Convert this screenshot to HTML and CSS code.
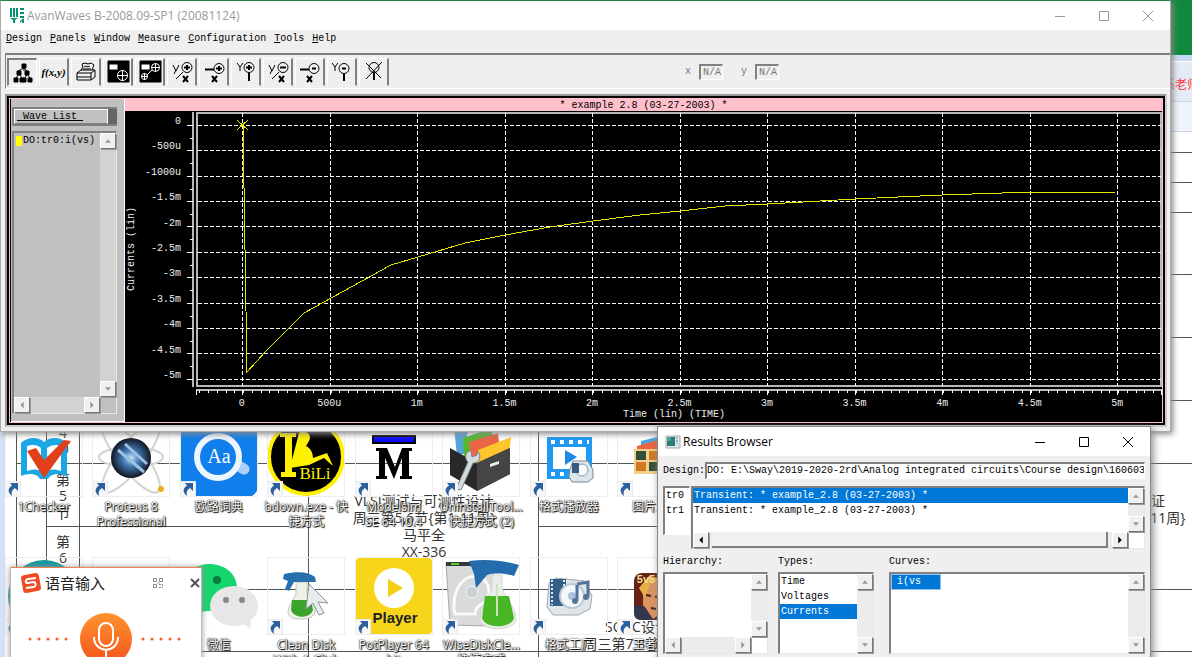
FILE: index.html
```html
<!DOCTYPE html>
<html lang="en">
<head>
<meta charset="utf-8">
<title>AvanWaves</title>
<link rel="stylesheet" href="styles.css">
</head>
<body>
<svg class="defs" aria-hidden="true">
  <symbol id="up" viewBox="0 0 16 16"><path d="M4.500 10h7L8 6z"/></symbol>
  <symbol id="down" viewBox="0 0 16 16"><path d="M4.500 6h7L8 10z"/></symbol>
  <symbol id="left" viewBox="0 0 16 16"><path d="M10 4v8L6 8z"/></symbol>
  <symbol id="right" viewBox="0 0 16 16"><path d="M6 4v8l4-4z"/></symbol>
  <symbol id="shortcut" viewBox="0 0 16 16"><path d="M0 0h16v16H0z" fill="#f7f7f7" stroke="#ddd"/><path d="M5 2h8v8l-3-3c-3 2-4 4-3 8C2 11 3 7 7 4.500z" fill="#2c5f9e"/></symbol>
  <symbol id="min" viewBox="0 0 12 12"><path d="M1 6.500h10" fill="none"/></symbol>
  <symbol id="max" viewBox="0 0 12 12"><path d="M1.500 1.500h9v9h-9z" fill="none"/></symbol>
  <symbol id="close" viewBox="0 0 12 12"><path d="M1 1l10 10M11 1L1 11" fill="none"/></symbol>
</svg>
<main class="desktop">
  <svg class="sheet" width="1192" height="657" viewBox="0 0 1192 657" aria-hidden="true">
    <path d="M0 0h5v657H0z" fill="#d3e2f5"/>
    <path d="M1160 0h32v55h-32z" fill="#10893e"/>
    <path d="M1160 55h32v6h-32z" fill="#c8daf3"/>
    <path d="M1160 62h32v39h-32z" fill="#e4ebf7"/>
    <path d="M1160 102h32v29h-32z" fill="#eff4fb"/>
    <path d="M1160 101.500h32M1160 131.500h32" stroke="#c9d6e8"/>
    <path d="M16.500 420v237M46.500 420v237M79.500 420v237M308.500 420v237M538.500 420v237M16 463.500h1176M46 526.500h262M538 526.500h140M80 589.500h1112M80 651.500h1112M1160 152.500h32M1160 182.500h32M1160 212.500h32M1160 274.500h32M1160 337.500h32M1160 400.500h32" stroke="#555"/>
    <g class="sheet-text">
      <text x="63" y="438">4</text><text x="63" y="453">节</text>
      <text x="63" y="485">第</text><text x="63" y="501">5</text><text x="63" y="518">节</text>
      <text x="63" y="547">第</text><text x="63" y="563">6</text>
      <text x="424" y="506">VLSI测试与可测性设计</text>
      <text x="424" y="523">周三第5,6节{第1-11周}</text>
      <text x="424" y="540">马平全</text>
      <text x="424" y="557">XX-336</text>
      <text x="637" y="632">SOPC设计</text>
      <text x="631" y="649">周三第7,8节{第</text>
      <text x="1158" y="506">证</text><text x="1168" y="523">11周}</text>
      <text class="red" x="1181" y="89">系老师</text>
    </g>
  </svg>

  <section class="icons" aria-label="Desktop shortcuts">
    <a class="icon" href="#"><svg viewBox="0 0 78 78"><path d="M16 24c6-6 17-7 23-1 6-6 17-5 23 1v33c-7-3-16-3-19 3h-8c-3-6-12-6-19-3z" fill="#1aa7e6"/><path d="M22 27c6-2 11-1 14 2v23c-4-2-9-2-14 0zM42 29c4-3 9-4 14-2v25c-5-2-10-2-14 0z" fill="#fff"/><path d="M22 32l9-3 8 12 20-20 7 1-27 37z" fill="#e2401b"/><use href="#shortcut" y="62" width="16" height="16"/></svg><span>1Checker</span></a>
    <a class="icon" href="#"><svg viewBox="0 0 78 78"><defs><radialGradient id="orb"><stop offset="0" stop-color="#cce4fa"/><stop offset=".4" stop-color="#447cb5"/><stop offset="1" stop-color="#111521"/></radialGradient></defs><g fill="none" stroke="#cdd4d3" stroke-width="2"><ellipse cx="39" cy="38" rx="32" ry="10"/><ellipse cx="39" cy="38" rx="44" ry="13" transform="rotate(52 39 38)"/><ellipse cx="39" cy="38" rx="44" ry="13" transform="rotate(128 39 38)"/></g><circle cx="39" cy="39" r="20" fill="url(#orb)"/><path d="M26 31l26 22M33 25l22 20" stroke="#9bc2e5" stroke-width="3" fill="none"/><circle cx="69" cy="70" r="3" fill="#efac23"/><use href="#shortcut" y="62" width="16" height="16"/></svg><span>Proteus 8 Professional</span></a>
    <a class="icon" href="#"><svg viewBox="0 0 78 78"><rect width="78" height="78" rx="11" fill="#117feb"/><path d="M55 45l9 5" stroke="#a9d0f8" stroke-width="11" stroke-linecap="round"/><circle cx="38" cy="38" r="21" fill="#117feb" stroke="#edf5ff" stroke-width="6"/><text x="39" y="44" text-anchor="middle" fill="#fff" font-family="Liberation Serif" font-size="20">Aa</text><use href="#shortcut" y="62" width="16" height="16"/></svg><span>欧路词典</span></a>
    <a class="icon" href="#"><svg viewBox="0 0 78 78"><circle cx="39" cy="38" r="37" fill="#000" stroke="#fff200" stroke-width="4"/><path d="M13 14h16v4h-4v35h4v5H14v-5h4V18h-5z" fill="#fff200"/><path d="M32 14c5-4 14 1 10 8l-3 5c5 2 7 8 7 12l14-5 6 13-9-8-15 7-19 3 3-12z" fill="#fff200"/><text x="48" y="60" text-anchor="middle" fill="#fff200" font-family="Liberation Serif" font-size="17">BiLi</text><use href="#shortcut" y="62" width="16" height="16"/></svg><span>bdown.exe - 快捷方式</span></a>
    <a class="icon" href="#"><svg viewBox="0 0 78 78"><path d="M18 17h42v7H18z" fill="#0809f5" stroke="#000" stroke-width="2"/><path d="M21 60v-3h3V32h-3v-3h11l8 19 7-19h10v3h-3v25h3v3H45v-3h2V39l-8 21-9-21v18h2v3z"/><use href="#shortcut" y="62" width="16" height="16"/></svg><span>Modelsim<br>SE 64 10.4</span></a>
    <a class="icon" href="#"><svg viewBox="0 0 78 78"><path d="M12 8l14-2-2 28-9 3z" fill="#52a5d8"/><path d="M21 19l29-10 2 27-30 5z" fill="#56b82c"/><path d="M27 23l29-9 3 28-30 1z" fill="#e96545"/><path d="M36 31l33-13-3 27-31 2z" fill="#ffc52d"/><path d="M8 29l27 15 33-15v26L35 72 8 56z" fill="#282828"/><path d="M35 44v28l33-17V29z" fill="#454545"/><path d="M48 45l9-3v3l-9 3z" fill="#eee"/><path d="M14 70l12-27c-5-5-1-12 3-11l1 6 5-2 1-4c5 7-1 13-5 12L19 71z" fill="#d5dade" stroke="#778888"/><use href="#shortcut" y="62" width="16" height="16"/></svg><span>UninstallTool...<br>快捷方式 (2)</span></a>
    <a class="icon" href="#"><svg viewBox="0 0 78 78"><path d="M17 18h45v42H17z" fill="#1f99f4"/><path d="M23 28h33v22H23z" fill="#fff"/><path d="M21 23h38M21 55h38" stroke="#fff" stroke-width="4" stroke-dasharray="4 5"/><path d="M35 31v15l12-8z" fill="#1f88e5"/><path d="M40 50l3-8h15l5 9v8l-5 4H42l-3-5z" fill="#dce4ec" stroke="#7c8791"/><circle cx="52" cy="51" r="6" fill="#f8fafb" stroke="#829cb4"/><path d="M42 44h7v10h-7z" fill="#365b7c"/><use href="#shortcut" y="62" width="16" height="16"/></svg><span>格式播放器</span></a>
    <a class="icon" href="#"><svg viewBox="0 0 78 78"><path d="M24 22l20-5 10 10-10 20-20-5z" fill="#47a8df"/><path d="M20 27l21-6 6 30-27 2z" fill="#ed6441"/><path d="M17 30h27v25H17z" fill="#f2cf8b"/><path d="M19 32h10v9H19zM32 43h10v9H32z" fill="#334f39"/><path d="M19 43h10v9H19zM32 32h10v9H32z" fill="#d17822"/><use href="#shortcut" y="62" width="16" height="16"/></svg><span>图片工厂</span></a>

    <a class="icon" href="#"><svg viewBox="0 0 78 78"><circle cx="39" cy="39" r="36" fill="#10989b"/><use href="#shortcut" y="62" width="16" height="16"/></svg><span></span></a>
    <a class="icon" href="#"><svg viewBox="0 0 78 78"><use href="#shortcut" y="62" width="16" height="16"/></svg><span></span></a>
    <a class="icon" href="#"><svg class="bare" viewBox="0 0 78 78"><path d="M26 7c18-1 31 9 31 24S43 54 27 54L0 59V14z" fill="#16d46e"/><circle cx="37" cy="23" r="4" fill="#087d3c"/><ellipse cx="54" cy="49" rx="24" ry="20" fill="#e7e7e7"/><path d="M62 66l9 6-1-12z" fill="#e7e7e7"/><circle cx="46" cy="43" r="3" fill="#888"/><circle cx="62" cy="43" r="3" fill="#888"/></svg><span>微信</span></a>
    <a class="icon" href="#"><svg viewBox="0 0 78 78"><path d="M29 25h11v12l8 14c1 8-4 11-14 11-11 0-15-3-12-12l7-13z" fill="#edf1e6" stroke="#bfc8b7"/><path d="M25 43h19l2 10c-3 9-19 9-22 0z" fill="#3aa32e"/><path d="M17 17c14-3 25-2 31 3l1 5H27l-5 9-4-2 3-8-5-2z" fill="#286fae"/><path d="M42 27l19 19-10-1 6 11-5 2-6-12-7 6z" fill="#e7ecee" stroke="#8a969b"/><use href="#shortcut" y="62" width="16" height="16"/></svg><span>Clean Disk<br>With 1-Click</span></a>
    <a class="icon" href="#"><svg viewBox="0 0 78 78"><rect x="1" y="1" width="76" height="76" rx="4" fill="#f7d51b"/><circle cx="39" cy="31" r="20" fill="#fff"/><path d="M33 22v18l15-9z" fill="#f4cf16"/><text x="40" y="66" text-anchor="middle" fill="#222" font-family="Liberation Sans" font-size="15" font-weight="bold">Player</text><use href="#shortcut" y="62" width="16" height="16"/></svg><span>PotPlayer 64<br>bit</span></a>
    <a class="icon" href="#"><svg viewBox="0 0 78 78"><path d="M4 6l48-1-3 64-41-1z" fill="#d8dadb" stroke="#a4a8aa"/><path d="M4 5h34v4H4z" fill="#34393c"/><path d="M9 7h8" stroke="#56ce2b" stroke-width="2"/><path d="M12 52c-2-38 34-42 35-17 1 15-13 8-14 22H13z" fill="none" stroke="#fafafa" stroke-width="3"/><circle cx="30" cy="35" r="6" fill="#ccd0d1" stroke="#f8f8f8"/><path d="M50 18h10v13c0 5 13 17 14 31 0 13-36 13-36 0 1-15 12-26 12-31z" fill="#ebeee8" stroke="#d5d8d1"/><path d="M43 39h24l5 22c-3 11-29 11-32 0z" fill="#49b626"/><path d="M55 27v32" stroke="#cde3ba" stroke-width="2"/><path d="M27 4c17-2 33-1 50 4l-5 11c-11-3-20-3-27-1L34 31l-2-14z" fill="#246cad"/><use href="#shortcut" y="62" width="16" height="16"/></svg><span>WiseDiskCle...<br>快捷方式</span></a>
    <a class="icon" href="#"><svg viewBox="0 0 78 78"><path d="M19 26l7-5 28 3 8 15-2 13-12 6H23l-6-8z" fill="#dfe5e9" stroke="#9ca8b0"/><path d="M20 22h16v27H20z" fill="#375e86"/><path d="M22 23v25M34 23v25" stroke="#d7edf8" stroke-width="2" stroke-dasharray="2 2"/><circle cx="42" cy="39" r="12" fill="#f5f7f8" stroke="#b9c8d2" stroke-width="2"/><circle cx="42" cy="39" r="4" fill="#abc6dc"/><path d="M47 27l11-2v15M47 28v16" fill="none" stroke="#54749a" stroke-width="3"/><circle cx="45" cy="44" r="3" fill="#54749a"/><circle cx="56" cy="40" r="3" fill="#54749a"/><use href="#shortcut" y="62" width="16" height="16"/></svg><span>格式工厂</span></a>
    <a class="icon" href="#"><svg viewBox="0 0 78 78"><rect x="17" y="16" width="46" height="47" rx="8" fill="#682116"/><path d="M26 29l10-7 15 8-3 23-12 9-10-14z" fill="#dc9460"/><path d="M22 31l10-12 14 3-13 4-5 15z" fill="#e6b04b"/><path d="M17 48l11 2 8 13H24c-5 0-7-3-7-7z" fill="#33374e"/><text x="29" y="26" text-anchor="middle" fill="#f7df8b" font-family="Liberation Sans" font-size="11" font-weight="bold">5v5</text><path d="M29 38l5 1M38 40l5-1M34 51l5 1" stroke="#442018" stroke-width="2"/><use href="#shortcut" y="62" width="16" height="16"/></svg><span>王者荣耀</span></a>
  </section>

  <section class="voice">
    <svg class="sogou" viewBox="0 0 20 20"><rect x="1" y="1" width="18" height="18" rx="3" fill="#f04b24" transform="rotate(-10 10 10)"/><path d="M15 5L7 6c-3 1-3 4 0 4l5-1c4 0 3 5 0 5l-7 1" fill="none" stroke="#fff" stroke-width="2"/></svg>
    <h2>语音输入</h2>
    <svg class="qr" viewBox="0 0 12 12"><path d="M1.500 1.500h3v3h-3zM7.500 1.500h3v3h-3zM1.500 7.500h3v3h-3zM7 7.500h2M10.500 7v2M7 10.500h2M10 10.500h1M5.500 6h2" fill="none" stroke="#888"/></svg>
    <button class="voice-close" aria-label="Close"><svg viewBox="0 0 12 12"><path d="M2 2l8 8M10 2l-8 8" stroke="#555" stroke-width="2"/></svg></button>
    <svg class="microphone" viewBox="0 0 191 64"><defs><linearGradient id="flame" x2="0" y2="1"><stop stop-color="#ff932f"/><stop offset="1" stop-color="#f4511b"/></linearGradient></defs><circle cx="96" cy="36" r="26" fill="url(#flame)"/><rect x="89" y="20" width="14" height="23" rx="7" fill="none" stroke="#fff" stroke-width="2"/><path d="M84 34c0 17 24 17 24 0M96 47v11" stroke="#fff" stroke-width="2" fill="none"/><path d="M20 36h38M133 36h38" stroke="#ff5b20" stroke-width="3" stroke-linecap="round" stroke-dasharray="0 9"/></svg>
  </section>

  <section class="window waves">
    <header class="titlebar">
      <svg class="logo" viewBox="0 0 16 16"><path d="M1 0h2v9H1zM4 0h2v9H4zM7 0h2v9H7zM1 10h8l-3 2v3H4v-3zM11 0h4v2h-4zM11 4h4v2h-4zM11 8h4v2h-4zM15 10v5h-2v-2l-2 2v-2z" fill="#079071"/></svg>
      <h1>AvanWaves B-2008.09-SP1 (20081124)</h1>
      <div class="controls"><button aria-label="Minimize"><svg><use href="#min"/></svg></button><button aria-label="Maximize"><svg><use href="#max"/></svg></button><button aria-label="Close"><svg><use href="#close"/></svg></button></div>
    </header>
    <nav class="menubar"><button><u>D</u>esign</button><button><u>P</u>anels</button><button><u>W</u>indow</button><button><u>M</u>easure</button><button><u>C</u>onfiguration</button><button><u>T</u>ools</button><button><u>H</u>elp</button></nav>
    <div class="toolbar">
      <div class="tools">
        <button class="pressed" aria-label="Hierarchy"><svg viewBox="0 0 24 24"><path d="M11 4h4v4h-4zM6 11h4v4H6zM14 11h4v4h-4zM3 18h4v4H3zM9 18h4v4H9zM12 18h3v4h-3zM17 18h4v4h-4z" fill="#000"/><path d="M13 7v4M7 11l6-3 4 4M5 18l3-4 3 4M14 18l2-4 3 4"/></svg></button>
        <button aria-label="Function"><span class="fx">f(x,y)</span></button>
        <button aria-label="Print"><svg viewBox="0 0 24 24"><path d="M3 13h14v7H3zM3 13l4-3h14l-4 3M17 20l4-3v-7M7 10l2-3-1-3 3-1 3 1 3-1 3 2-2 5M3 17h14M10 7l2-1 2 1 2-1M9 9h8"/></svg></button>
        <button aria-label="Panel zoom"><svg viewBox="0 0 24 24"><path d="M2 1h21v21H2z" fill="#000"/><path d="M3 4h9v6H3z" fill="#fff"/><g stroke="#fff"><circle cx="16.500" cy="15.500" r="5"/><path d="M11 15.500h11M16.500 10v11"/></g></svg></button>
        <button aria-label="Panel fit"><svg viewBox="0 0 24 24"><path d="M2 1h21v21H2z" fill="#000"/><path d="M3 4h9v6H3z" fill="#fff"/><g stroke="#fff"><circle cx="17.500" cy="7.500" r="4"/><path d="M13 7.500h9M17.500 3v9M9 15l5-5"/><circle cx="6.500" cy="16.500" r="3"/><path d="M3 16.500h7M6.500 13v7"/></g></svg></button>
        <button aria-label="Zoom XY in"><svg viewBox="0 0 24 24"><circle cx="17" cy="7.500" r="5"/><path d="M3 5l3 6 3-6M6 10l-2 4M13 12l-7 7"/><path d="M14 7.500h6M17 5v5M13 16l5 6M18 16l-5 6" stroke-width="2"/></svg></button>
        <button aria-label="Zoom X in"><svg viewBox="0 0 24 24"><circle cx="17" cy="8.500" r="5"/><path d="M3 9.500h9M14 8.500h6M17 6v5M10 16l5 6M15 16l-5 6" stroke-width="2"/></svg></button>
        <button aria-label="Zoom Y in"><svg viewBox="0 0 24 24"><circle cx="15" cy="7.500" r="5"/><path d="M3 3l3 4 3-4M6 7v4"/><path d="M12 7.500h6M15 5v5M15 13v8" stroke-width="2"/></svg></button>
        <button aria-label="Zoom XY out"><svg viewBox="0 0 24 24"><circle cx="17" cy="7.500" r="5"/><path d="M3 5l3 6 3-6M6 10l-2 4M13 12l-7 7"/><path d="M14 7.500h6M13 16l5 6M18 16l-5 6" stroke-width="2"/></svg></button>
        <button aria-label="Zoom X out"><svg viewBox="0 0 24 24"><circle cx="16" cy="8.500" r="5"/><path d="M2 9.500h9M14 8.500h4M9 16l5 6M14 16l-5 6" stroke-width="2"/></svg></button>
        <button aria-label="Zoom Y out"><svg viewBox="0 0 24 24"><circle cx="14" cy="8.500" r="5"/><path d="M2 3l3 4 3-4M5 7v4"/><path d="M12 8.500h4M14 14v7" stroke-width="2"/></svg></button>
        <button aria-label="Zoom reset"><svg viewBox="0 0 24 24"><circle cx="12" cy="7.500" r="5"/><path d="M4 3l15 15M20 2L4 19"/><path d="M12 13v7" stroke-width="2"/></svg></button>
      </div>
      <div class="coords"><label for="cx">x</label><input id="cx" value="N/A" readonly><label for="cy">y</label><input id="cy" value="N/A" readonly></div>
    </div>
    <div class="frame"><div class="panes">
      <aside class="wave-panel">
        <div class="wave-head"><button><u>&nbsp;Wave List&nbsp;</u></button><i></i></div>
        <div class="listbox wave-list">
          <div class="items"><span class="wave"><i></i>DO:tr0:i(vs)</span></div>
          <div class="vbar"><button aria-label="Scroll up"><svg><use href="#up"/></svg></button><button aria-label="Scroll down"><svg><use href="#down"/></svg></button></div>
          <div class="hbar"><button aria-label="Scroll left"><svg><use href="#left"/></svg></button><button aria-label="Scroll right"><svg><use href="#right"/></svg></button></div>
        </div>
      </aside>
      <div class="graph">
        <div class="graph-title">* example 2.8 (03-27-2003) *</div>
        <div class="graph-body">
          <div class="y-title"><span>Currents (lin)</span></div>
          <div class="y-labels"><span>0</span><span>-500u</span><span>-1000u</span><span>-1.5m</span><span>-2m</span><span>-2.5m</span><span>-3m</span><span>-3.5m</span><span>-4m</span><span>-4.5m</span><span>-5m</span></div>
          <div class="plot">
            <svg class="plot-lines" viewBox="186 111 976 285" preserveAspectRatio="none" shape-rendering="crispEdges" fill="none">
              <g stroke="#b8b8b8" stroke-width="2"><path d="M193 112v275M197 387V113h964v273H197M196 390h966"/></g>
              <path d="M187 125.500h6M187 150.500h6M187 176.500h6M187 201.500h6M187 226.500h6M187 252.500h6M187 277.500h6M187 303.500h6M187 328.500h6M187 353.500h6M187 379.500h6M190 138.500h3M190 163.500h3M190 189.500h3M190 214.500h3M190 239.500h3M190 265.500h3M190 290.500h3M190 316.500h3M190 341.500h3M190 366.500h3" stroke="#fff"/>
              <path d="M199.250 391.500H1162" stroke="#fff" stroke-width="3" stroke-dasharray="1 7.750"/>
              <path d="M196.500 390v5M242.500 390v5M330.500 390v5M417.500 390v5M505.500 390v5M592.500 390v5M680.500 390v5M767.500 390v5M855.500 390v5M942.500 390v5M1030.500 390v5M1117.500 390v5M1161.500 390v5" stroke="#fff"/>
              <path d="M198 125.500h963M198 150.500h963M198 176.500h963M198 201.500h963M198 226.500h963M198 252.500h963M198 277.500h963M198 303.500h963M198 328.500h963M198 353.500h963M198 379.500h963M242.500 113v273M330.500 113v273M417.500 113v273M505.500 113v273M592.500 113v273M680.500 113v273M767.500 113v273M855.500 113v273M942.500 113v273M1030.500 113v273M1117.500 113v273" stroke="#fff" stroke-dasharray="4 2"/>
              <path d="M243 125l4 247 19-21 38-38 87-48 27-8 47-14 40-8 45-8 43-6 47-6 40-4 45-5 43-2 87-5 87-4 60-2 115-1M237 120l11 10M248 120l-11 10" stroke="#e5e500"/>
            </svg>
            <div class="x-labels"><span>0</span><span>500u</span><span>1m</span><span>1.5m</span><span>2m</span><span>2.5m</span><span>3m</span><span>3.5m</span><span>4m</span><span>4.5m</span><span>5m</span></div>
            <div class="x-title">Time (lin) (TIME)</div>
          </div>
        </div>
      </div>
    </div></div>
  </section>

  <section class="window browser">
    <header class="titlebar">
      <svg class="logo" viewBox="0 0 16 16"><path d="M1 2h14v12H1z" fill="#dce6ea" stroke="#aaa"/><path d="M2 3h8v9H2z" fill="#2f7c70"/><path d="M2 3h4v4H2z" fill="#49a3a0"/><path d="M12 3v7" stroke="#4f8ac2" stroke-dasharray="2 1"/></svg>
      <h2>Results Browser</h2>
      <div class="controls"><button aria-label="Minimize"><svg><use href="#min"/></svg></button><button aria-label="Maximize"><svg><use href="#max"/></svg></button><button aria-label="Close"><svg><use href="#close"/></svg></button></div>
    </header>
    <div class="browser-body">
      <div class="design-row"><label for="design">Design:</label><input id="design" value="DO: E:\Sway\2019-2020-2rd\Analog integrated circuits\Course design\160603012"></div>
      <div class="runs">
        <ul class="sunken run-ids"><li>tr0</li><li>tr1</li></ul>
        <div class="listbox run-list">
          <ul class="items"><li class="selected">Transient: * example_2.8 (03-27-2003) *</li><li>Transient: * example_2.8 (03-27-2003) *</li></ul>
          <div class="vbar"><button aria-label="Scroll up"><svg><use href="#up"/></svg></button><button aria-label="Scroll down"><svg><use href="#down"/></svg></button></div>
          <div class="hbar active"><button aria-label="Scroll left"><svg><use href="#left"/></svg></button><i class="thumb"></i><button aria-label="Scroll right"><svg><use href="#right"/></svg></button></div>
        </div>
      </div>
      <div class="columns">
        <div><h3>Hierarchy:</h3><div class="listbox"><ul class="items"></ul><div class="vbar"><button aria-label="Scroll up"><svg><use href="#up"/></svg></button><button aria-label="Scroll down"><svg><use href="#down"/></svg></button></div><div class="hbar"><button aria-label="Scroll left"><svg><use href="#left"/></svg></button><button aria-label="Scroll right"><svg><use href="#right"/></svg></button></div></div></div>
        <div class="types"><h3>Types:</h3><div class="listbox"><ul class="items"><li>Time</li><li>Voltages</li><li class="selected">Currents</li></ul><div class="vbar"><button aria-label="Scroll up"><svg><use href="#up"/></svg></button><button aria-label="Scroll down"><svg><use href="#down"/></svg></button></div></div></div>
        <div><h3>Curves:</h3><div class="listbox"><ul class="items"><li class="selected curve">i(vs</li></ul><div class="vbar"><button aria-label="Scroll up"><svg><use href="#up"/></svg></button><button aria-label="Scroll down"><svg><use href="#down"/></svg></button></div></div></div>
      </div>
    </div>
  </section>
</main>
</body>
</html>
```

FILE: styles.css
```css
* { box-sizing: border-box; }
body { margin: 0; background: #fff; font: 10px/15px "Liberation Mono", "Noto Sans CJK SC", monospace; color: #000; }
button, input { font: inherit; color: inherit; margin: 0; padding: 0; border: 0; background: none; border-radius: 0; }
h1, h2, h3, ul { margin: 0; padding: 0; font: inherit; list-style: none; }
svg { display: block; }
.defs { position: absolute; width: 0; height: 0; }
.desktop { position: relative; height: 100vh; min-height: 640px; overflow: hidden; }
.sheet { position: absolute; top: 0; left: 0; }
.sheet-text { font: 14px "Open Sans", "Noto Sans CJK SC", sans-serif; text-anchor: middle; fill: #333; }
.sheet-text .red { fill: #f33; font-size: 12px; }

.icons { position: absolute; top: 419px; left: 0; width: 700px; display: grid; grid-template-columns: repeat(8, minmax(0, 1fr)); grid-auto-rows: 138px; }
.icon { display: flex; flex-direction: column; align-items: center; font: 12px/15px "Open Sans", "Noto Sans CJK SC", sans-serif; text-align: center; text-decoration: none; color: #fff; }
.icon > svg { width: 78px; height: 78px; flex: none; outline: 1px solid #eee; outline-offset: -1px; }
.icon > .bare { outline: 0; }
.icon span { padding-top: 2px; max-width: 88px; text-shadow: 0 0 1px #000, 1px 1px 1px #000, 0 0 2px #444; }

.voice { position: absolute; left: 10px; top: 567px; width: 192px; display: grid; grid-template-columns: 20px 1fr 12px 25px 12px; align-items: center; row-gap: 8px; padding: 3px 8px 0 10px; background: #fff; border: 1px solid #bbb; border-top-color: #ef8355; box-shadow: 0 0 6px #999; }
.voice > .voice-close { grid-column: 5; }
.voice { padding-right: 8px; }
.voice h2 { font: 15px/24px "Noto Sans CJK SC", sans-serif; color: #222; padding-left: 4px; }
.voice-close svg, .qr { width: 12px; height: 12px; }
.sogou { width: 20px; height: 20px; }
.microphone { grid-column: 1 / -1; width: 191px; height: 64px; margin-left: -11px; }

.window { position: absolute; background: #efefef; }
.titlebar { display: flex; align-items: center; height: 29px; background: #fff; font: 12px/16px "Open Sans", sans-serif; }
.titlebar .logo { width: 16px; height: 16px; flex: none; }
.controls { display: flex; margin-left: auto; }
.controls button { width: 44px; height: 28px; display: grid; place-items: center; }
.controls svg { width: 12px; height: 12px; stroke: currentColor; }

.waves { top: 0; left: 0; right: 21px; border: 1px solid #2b8049; border-color: #2b8049 #aaa #aaa; box-shadow: 2px 2px 6px #888; padding-bottom: 4px; }
.waves .titlebar { padding: 0 0 0 8px; color: #999; }
.waves h1 { padding-left: 2px; }
.menubar { display: flex; gap: 8px; height: 23px; padding: 1px 5px 0; align-items: flex-start; }
.menubar button { flex: none; }
.toolbar { display: flex; align-items: center; height: 36px; margin-left: 4px; border-top: 2px solid #808080; border-left: 1px solid #808080; border-bottom: 1px solid #fff; }
.tools { display: flex; gap: 2px; padding-left: 1px; }
.tools button { width: 30px; height: 28px; display: grid; place-items: center; border: 1px solid #fff; border-right: 2px solid #808080; border-bottom-color: #efefef; }
.tools .pressed { border-color: #808080 #fff #fff #808080; border-width: 2px 1px 1px 2px; }
.tools svg { width: 24px; height: 24px; fill: none; stroke: #000; }
.fx { font: italic bold 11px/20px "Liberation Serif", serif; white-space: nowrap; }
.coords { display: flex; gap: 8px; margin-left: 296px; color: #777; align-items: center; }
.coords label { padding-left: 10px; }
.coords label:first-child { padding-left: 0; }
.coords input { width: 24px; height: 16px; padding-left: 2px; border: 2px solid #808080; border-right: 1px solid #fff; border-bottom: 1px solid #fff; }
.frame { margin: 5px 3px 0 4px; border: 2px solid #808080; border-color: #999 #ccc #ccc #999; }
.panes { display: grid; grid-template-columns: 114px minmax(0, 1fr); border: 2px solid #000; outline: 1px solid #ffbfcb; outline-offset: -3px; padding: 1px 1px 1px 2px; background: #000; }
.wave-panel { display: flex; flex-direction: column; gap: 5px; padding: 8px 7px 7px 1px; background: #c0c0c0; border-right: 1px solid #fff; border-bottom: 1px solid #fff; }
.wave-head { display: flex; height: 19px; border: 2px solid #808080; border-right: 0; }
.wave-head button { flex: 1; border: 1px solid #fff; border-bottom-color: #808080; text-align: left; padding-left: 2px; line-height: 14px; }
.wave-head i { width: 9px; background: #666; }

.listbox { display: grid; grid-template-columns: minmax(0, 1fr) 16px; grid-template-rows: minmax(0, 1fr) auto; background: #fff; border: 2px solid #808080; border-right: 1px solid #e8e8e8; border-bottom: 1px solid #e8e8e8; }
.listbox .items { overflow: hidden; white-space: nowrap; }
.vbar, .hbar { display: flex; justify-content: space-between; background: #ececec; }
.vbar { flex-direction: column; }
.hbar { grid-column: 1; }
.vbar button, .hbar button { width: 16px; height: 16px; background: #f0f0f0; border: 1px solid #fff; border-right-color: #777; border-bottom-color: #777; box-shadow: 1px 1px #999; }
.vbar svg, .hbar svg { width: 14px; height: 14px; fill: #999; }
.hbar.active svg { fill: #000; }
.thumb { flex: 1; margin-right: 4px; margin-left: 3px; background: #f0f0f0; border-right: 2px solid #808080; border-bottom: 2px solid #808080; }
.wave-list { flex: 1; background: #c0c0c0; }
.wave-list .vbar, .wave-list .hbar { background: #d2d2d2; }
.wave { display: flex; align-items: center; gap: 1px; padding: 0 0 0 2px; }
.wave i { width: 6px; height: 10px; background: #ff0; flex: none; }

.graph { display: flex; flex-direction: column; background: #000; color: #eee; min-width: 0; }
.graph-title { height: 12px; line-height: 14px; background: #ffbfcb; color: #000; text-align: center; }
.graph-body { display: grid; grid-template-columns: 14px 47px minmax(0, 1fr); }
.y-title { display: flex; align-items: center; justify-content: center; padding-bottom: 34px; }
.y-title span { writing-mode: vertical-rl; rotate: 180deg; line-height: 12px; }
.y-labels { display: flex; flex-direction: column; justify-content: space-between; height: 266px; margin-top: 5px; padding-right: 5px; line-height: 12px; text-align: right; }
.plot-lines { width: 100%; height: 285px; }
.x-labels { display: grid; grid-template-columns: repeat(11, minmax(0, 1fr)); padding: 2px 1px 0 12px; line-height: 11px; text-align: center; }
.x-title { text-align: center; line-height: 11px; padding-bottom: 2px; }

.browser { top: 426px; left: 657px; right: 41px; border: 1px solid #888; box-shadow: 2px 2px 8px #888; }
.browser .titlebar { padding-left: 7px; height: 29px; }
.browser h2 { padding-left: 2px; }
.browser-body { padding: 6px 5px 12px; display: flex; flex-direction: column; gap: 5px; }
.design-row { display: flex; align-items: center; height: 16px; margin-bottom: 3px; }
.design-row label { width: 42px; }
.design-row input { flex: 1; min-width: 0; height: 17px; background: #fff; border: 2px solid #808080; border-right: 1px solid #fff; border-bottom: 1px solid #fff; }
.runs { display: grid; grid-template-columns: 27px minmax(0, 1fr); gap: 1px; align-items: start; }
.sunken { height: 49px; background: #fff; border: 2px solid #808080; border-right: 1px solid #fff; border-bottom: 1px solid #fff; padding-left: 1px; }
.run-list { height: 63px; }
.items li { padding-left: 1px; }
.selected { color: #fff; background: #0078d7; }
.columns { display: grid; grid-template-columns: 105px 101px minmax(0, 1fr); column-gap: 10px; }
.columns h3 { height: 15px; margin-bottom: 3px; }
.columns .listbox { height: 82px; }
.types .listbox { margin-right: 5px; }
.items .curve { width: 50px; border: 1px solid #8fc5f0; padding-left: 5px; line-height: 14px; }
```
